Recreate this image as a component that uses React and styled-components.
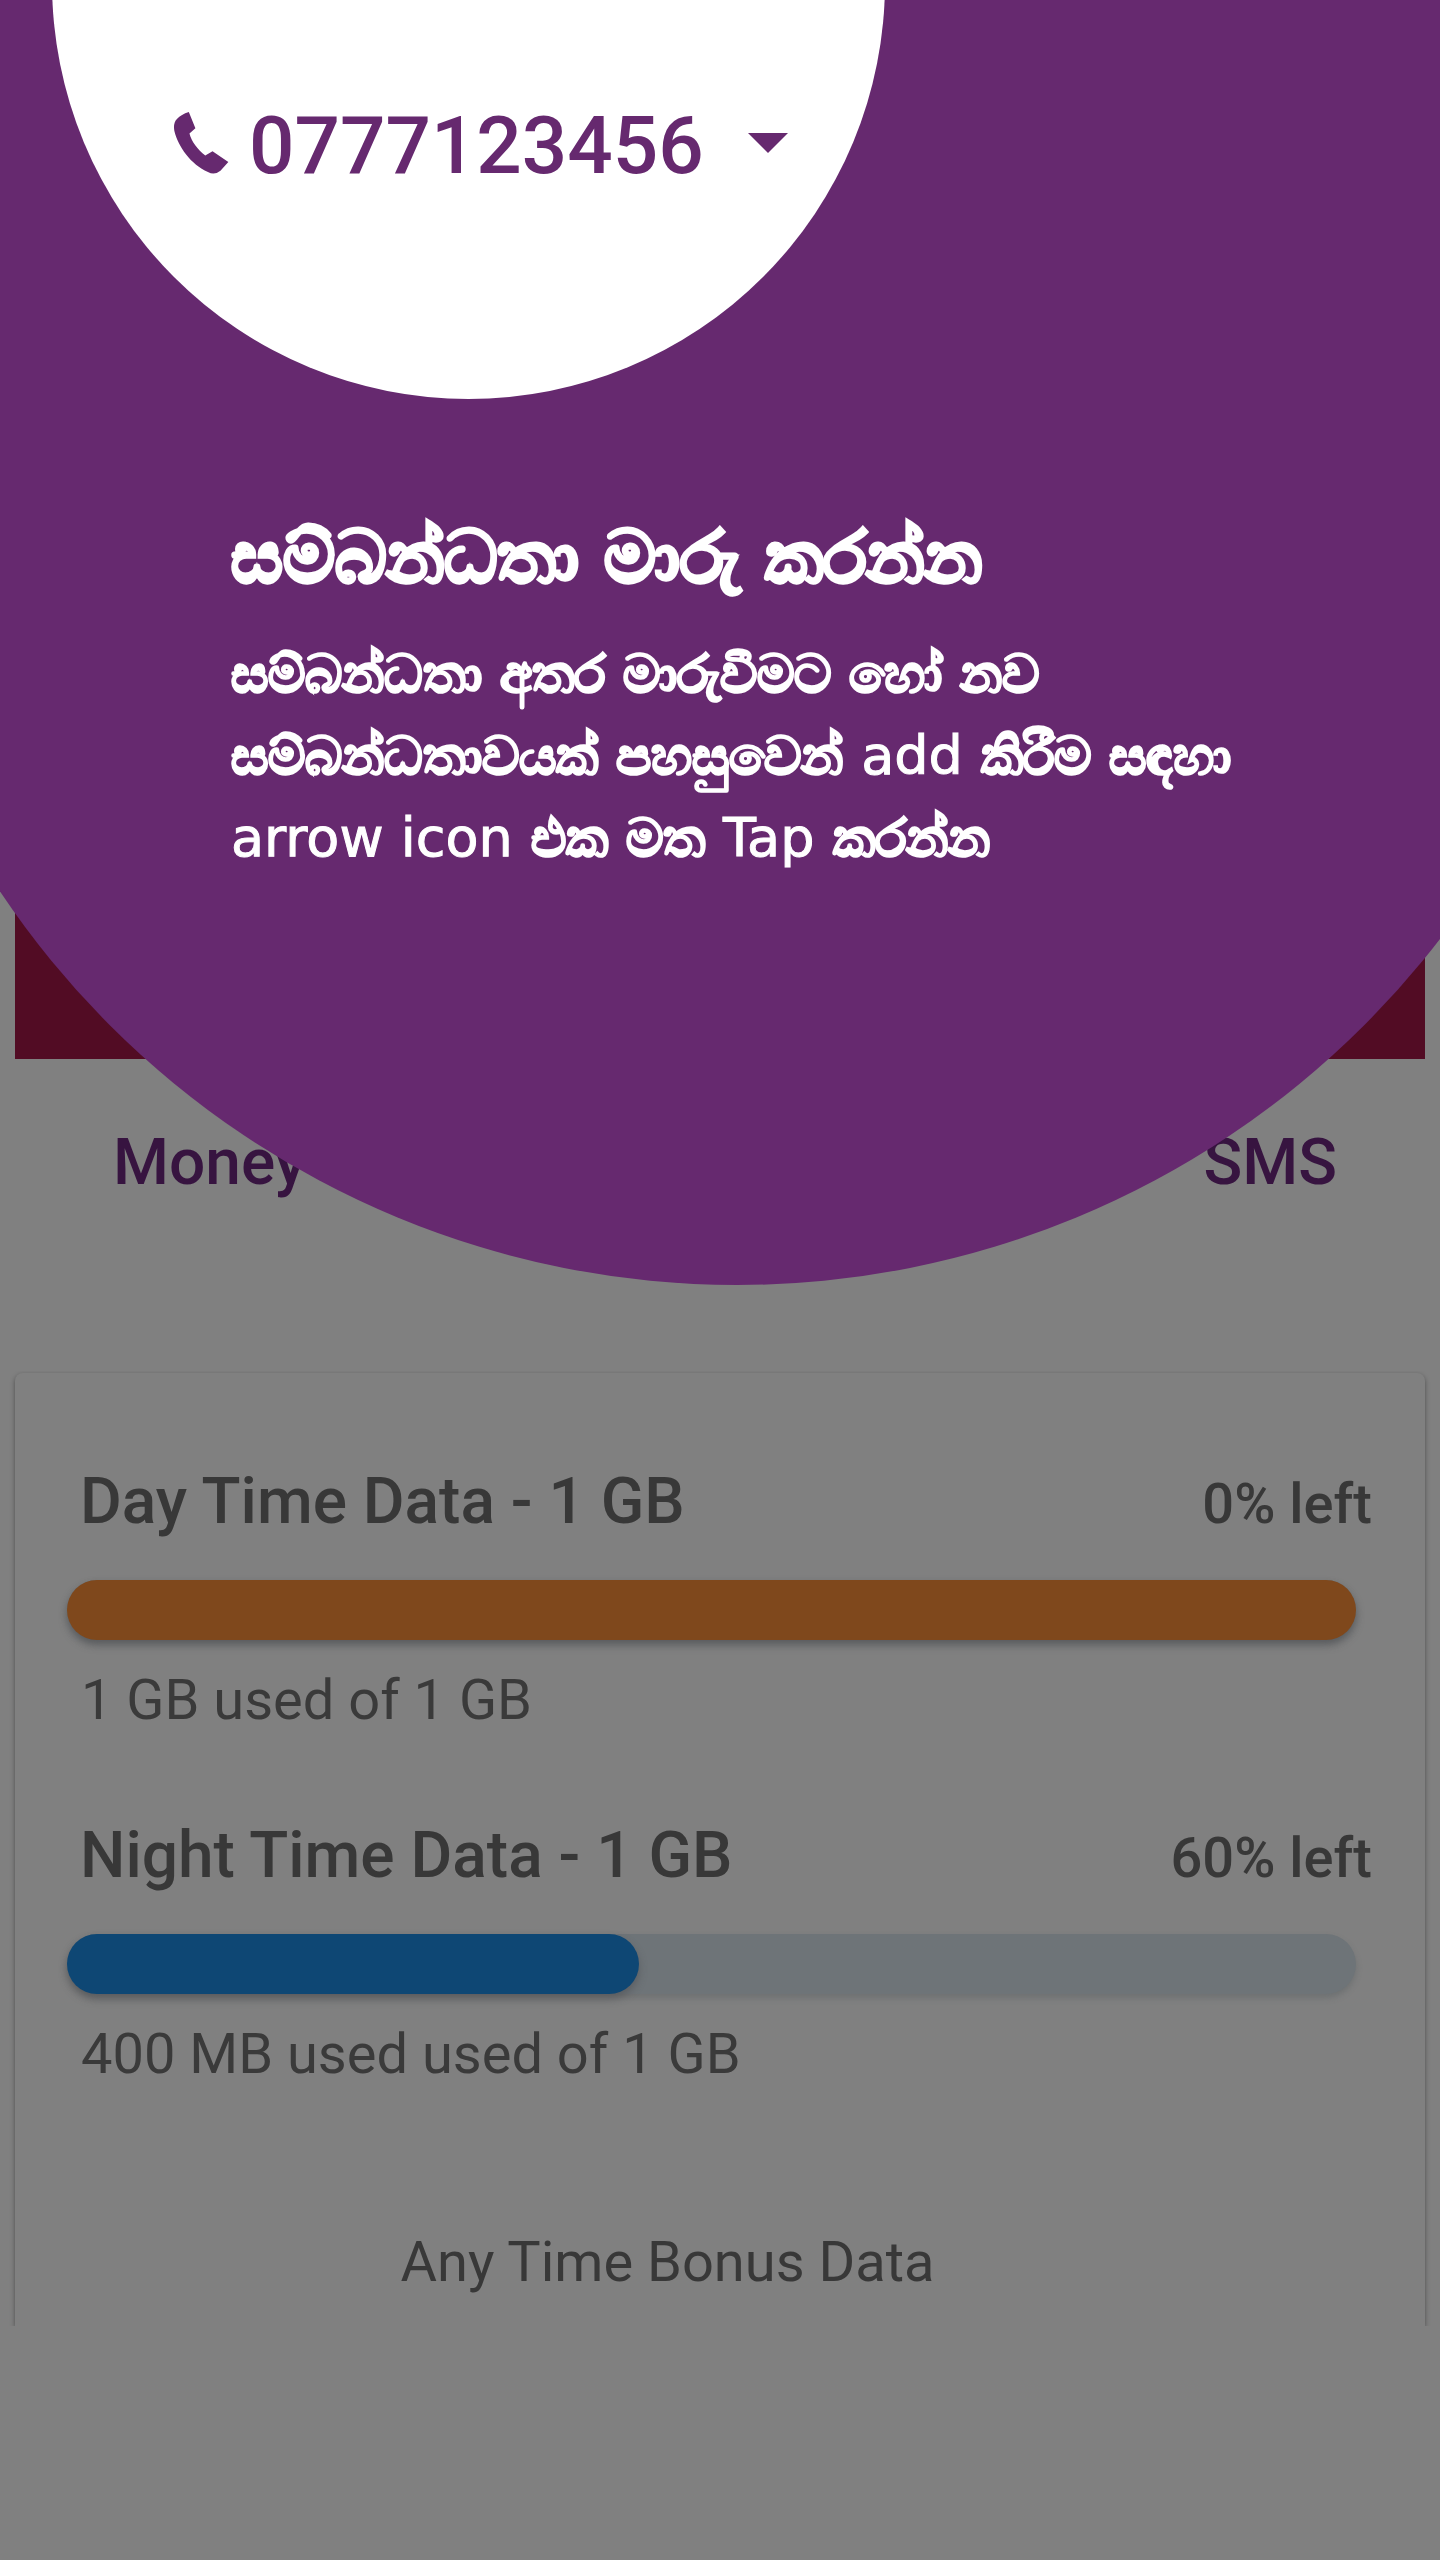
import React from "react";
import styled, { createGlobalStyle } from "styled-components";

const GlobalStyle = createGlobalStyle`
  *, *::before, *::after { box-sizing: border-box; }
  body {
    margin: 0;
    background: #808080;
    font-family: Roboto, "Noto Sans", sans-serif;
  }
  h1, h2, p { margin: 0; }
`;

const Screen = styled.div`
  position: relative;
  min-height: 100vh;
  overflow: hidden;
  padding: 0 15px;
`;

const Banner = styled.header`
  height: 1059px;
  background: #520c24;
`;

const Tabs = styled.nav`
  display: flex;
  justify-content: space-between;
  padding: 64px 88px 0 98px;
  margin-bottom: 170px;
`;

const Tab = styled.button`
  border: 0;
  padding: 0;
  background: none;
  color: #371440;
  font: 500 64px/80px Roboto, sans-serif;
`;

const Card = styled.main`
  padding: 89px 53px 28px 52px;
  border-radius: 8px 8px 0 0;
  box-shadow: 0 2px 5px rgba(0, 0, 0, 0.4);
  clip-path: inset(-2px -8px 0 -8px);
`;

const Usage = styled.section`
  margin-bottom: 80px;
`;

const UsageHeader = styled.div`
  display: flex;
  justify-content: space-between;
  align-items: baseline;
  padding-left: 13px;
  color: #383838;
`;

const UsageTitle = styled.h2`
  font-size: 64px;
  line-height: 80px;
  font-weight: 500;
`;

const Remaining = styled.span`
  font-size: 56px;
  line-height: 72px;
  font-weight: 500;
`;

const Track = styled.div`
  height: 60px;
  margin: 38px 16px 24px 0;
  border-radius: 30px;
  background: #6e7478;
  box-shadow: 0 4px 6px rgba(70, 78, 82, 0.3);
`;

const Fill = styled.div`
  height: 100%;
  border-radius: 30px;
  background: ${(p) => p.$color};
  box-shadow: 0 5px 8px rgba(60, 60, 66, 0.4);
`;

const Caption = styled.p`
  padding-left: 14px;
  color: #3a3a3a;
  font-size: 56px;
  line-height: 72px;
`;

const Bonus = styled.p`
  margin-top: 136px;
  padding-right: 104px;
  color: #383838;
  font-size: 56px;
  line-height: 72px;
  text-align: center;
`;

const CoachMark = styled.aside`
  position: absolute;
  top: -489px;
  left: calc(50% + 17px);
  width: 1774px;
  height: 1774px;
  margin-left: -887px;
  border-radius: 50%;
  background: #66296f;
  color: #fff;
`;

const Spotlight = styled.div`
  width: 833px;
  height: 833px;
  margin: 55px 0 0 202px;
  padding: 532px 0 0 121px;
  border-radius: 50%;
  background: #fff;
`;

const NumberPicker = styled.label`
  display: flex;
  align-items: center;
  color: #66296f;
`;

const PhoneIcon = styled.svg`
  width: 56px;
  height: 64px;
  margin: 0 20px 6px 0;
`;

const NumberSelect = styled.select`
  appearance: none;
  border: 0;
  padding: 0;
  background: none;
  color: inherit;
  font: 500 80px/96px Roboto, sans-serif;
`;

const Caret = styled.svg`
  width: 40px;
  height: 20px;
  margin: 0 0 6px 44px;
`;

const Tip = styled.div`
  padding: 114px 0 0 381px;
  font-family: "DejaVu Sans", sans-serif;
`;

const TipTitle = styled.h1`
  font-size: 72px;
  line-height: 88px;
  font-weight: 700;
  -webkit-text-stroke: 3px currentColor;
`;

const TipText = styled.p`
  margin-top: 32px;
  font-size: 52px;
  line-height: 82px;
  font-weight: 600;
  -webkit-text-stroke: 2px currentColor;
`;

const Latin = styled.span`
  font-size: 54px;
  font-weight: 400;
  -webkit-text-stroke: 1px currentColor;
`;

const packs = [
  { title: "Day Time Data - 1 GB", left: "0% left", fill: 100, color: "#7f481c", note: "1 GB used of 1 GB" },
  { title: "Night Time Data - 1 GB", left: "60% left", fill: 44.4, color: "#0e4774", note: "400 MB used used of 1 GB" },
];

export default function App() {
  return (
    <>
      <GlobalStyle />
      <Screen>
        <Banner />
        <Tabs>
          <Tab type="button">Money</Tab>
          <Tab type="button">SMS</Tab>
        </Tabs>
        <Card>
          {packs.map((pack) => (
            <Usage key={pack.title}>
              <UsageHeader>
                <UsageTitle>{pack.title}</UsageTitle>
                <Remaining>{pack.left}</Remaining>
              </UsageHeader>
              <Track>
                <Fill $color={pack.color} style={{ width: `${pack.fill}%` }} />
              </Track>
              <Caption>{pack.note}</Caption>
            </Usage>
          ))}
          <Bonus>Any Time Bonus Data</Bonus>
        </Card>
        <CoachMark>
          <Spotlight>
            <NumberPicker>
              <PhoneIcon viewBox="70 63 170 192" aria-hidden="true">
                <path
                  fill="currentColor"
                  d="M118 65 L138 114 L120 130 C126 155 145 178 168 197 L190 184 L238 217 L214 243 Q196 258 176 247 C125 225 85 170 74 122 Q70 98 82 86 Q95 72 118 65Z"
                />
              </PhoneIcon>
              <NumberSelect aria-label="Connection" defaultValue="0777123456">
                <option>0777123456</option>
              </NumberSelect>
              <Caret viewBox="0 0 40 20" aria-hidden="true">
                <path fill="currentColor" d="M0 0H40L20 20Z" />
              </Caret>
            </NumberPicker>
          </Spotlight>
          <Tip lang="si">
            <TipTitle>සම්බන්ධතා මාරු කරන්න</TipTitle>
            <TipText>
              සම්බන්ධතා අතර මාරුවීමට හෝ නව
              <br />
              සම්බන්ධතාවයක් පහසුවෙන් <Latin>add</Latin> කිරීම සඳහා
              <br />
              <Latin>arrow icon</Latin> එක මත <Latin>Tap</Latin> කරන්න
            </TipText>
          </Tip>
        </CoachMark>
      </Screen>
    </>
  );
}
